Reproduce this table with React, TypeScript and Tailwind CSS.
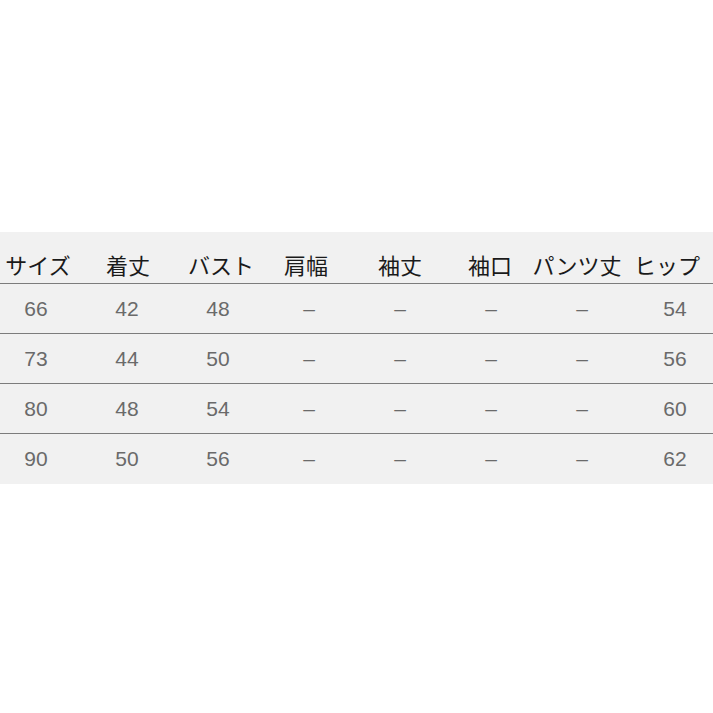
const headers = [
  { label: "サイズ", shift: "ml-[4px]" },
  { label: "着丈", shift: "ml-[2px]" },
  { label: "バスト", shift: "ml-[6px]" },
  { label: "肩幅", shift: "-ml-[6px]" },
  { label: "袖丈", shift: "" },
  { label: "袖口", shift: "-ml-[2px]" },
  { label: "パンツ丈", shift: "-ml-[10px]" },
  { label: "ヒップ", shift: "-ml-[12px]" },
];

const rows = [
  ["66", "42", "48", "–", "–", "–", "–", "54"],
  ["73", "44", "50", "–", "–", "–", "–", "56"],
  ["80", "48", "54", "–", "–", "–", "–", "60"],
  ["90", "50", "56", "–", "–", "–", "–", "62"],
];

export default function App() {
  return (
    <div className="w-[713px] h-[713px] bg-white pt-[232px]">
      <div className="bg-[#f1f1f1]">
        {/* header */}
        <div className="grid grid-cols-[repeat(8,72px)] gap-x-[19px] h-[52px] pt-[14px] border-b border-[#7c7c7c]">
          {headers.map((h) => (
            <div key={h.label} className="flex justify-center items-center">
              <span
                className={`whitespace-nowrap text-[22px] leading-[37px] text-[#1a1a1a] ${h.shift}`}
                style={{ fontFamily: '"Noto Sans CJK JP", sans-serif' }}
              >
                {h.label}
              </span>
            </div>
          ))}
        </div>

        {/* body */}
        {rows.map((row, i) => (
          <div
            key={i}
            className={`grid grid-cols-[repeat(8,72px)] gap-x-[19px] h-[50px] items-center ${
              i < rows.length - 1 ? "border-b border-[#7c7c7c]" : ""
            }`}
          >
            {row.map((v, j) => (
              <div
                key={j}
                className={`text-center text-[21px] text-[#6a6a6a] ${j === 7 ? "pl-[4px]" : ""}`}
                style={{ fontFamily: '"Liberation Sans", Arial, sans-serif' }}
              >
                {v}
              </div>
            ))}
          </div>
        ))}
      </div>
    </div>
  );
}
